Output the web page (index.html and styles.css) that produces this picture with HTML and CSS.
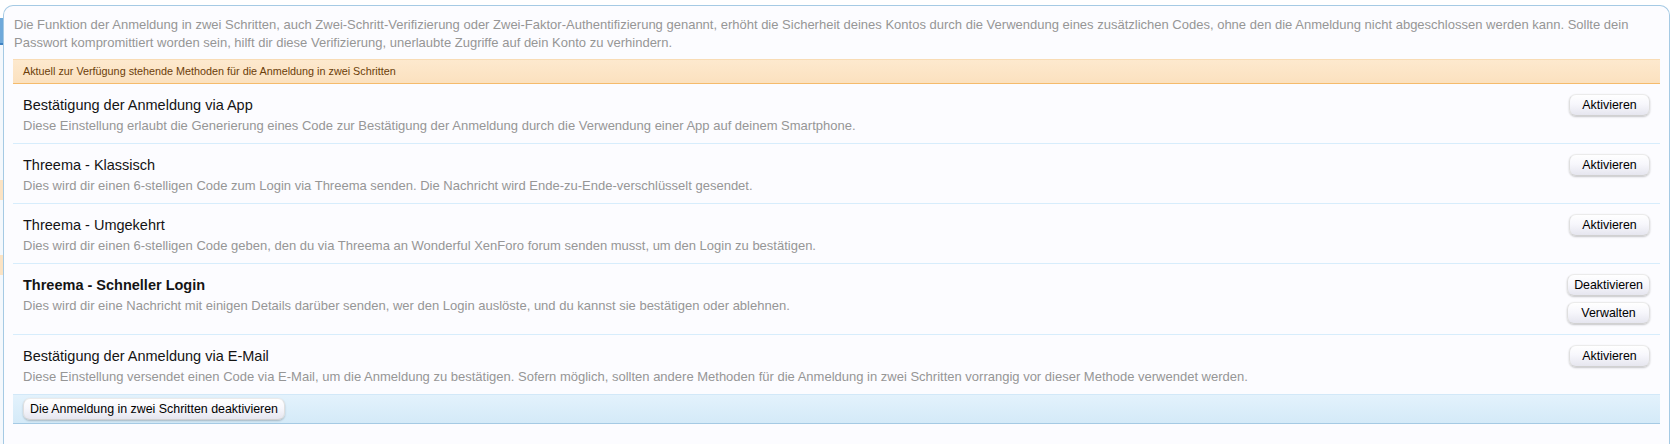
FILE: index.html
```html
<!DOCTYPE html>
<html lang="de">
<head>
<meta charset="utf-8">
<title>Zwei-Schritt-Verifizierung</title>
<link rel="stylesheet" href="styles.css">
</head>
<body>
<div class="page">
  <div class="edge"></div>
  <div class="overlay">
    <p class="intro">Die Funktion der Anmeldung in zwei Schritten, auch Zwei-Schritt-Verifizierung oder Zwei-Faktor-Authentifizierung genannt, erhöht die Sicherheit deines Kontos durch die Verwendung eines zusätzlichen Codes, ohne den die Anmeldung nicht abgeschlossen werden kann. Sollte dein Passwort kompromittiert worden sein, hilft dir diese Verifizierung, unerlaubte Zugriffe auf dein Konto zu verhindern.</p>
    <h3 class="subheading">Aktuell zur Verfügung stehende Methoden für die Anmeldung in zwei Schritten</h3>
    <ol class="methods">
      <li class="method">
        <div class="info">
          <h4 class="title">Bestätigung der Anmeldung via App</h4>
          <div class="explain">Diese Einstellung erlaubt die Generierung eines Code zur Bestätigung der Anmeldung durch die Verwendung einer App auf deinem Smartphone.</div>
        </div>
        <div class="controls"><button class="button">Aktivieren</button></div>
      </li>
      <li class="method">
        <div class="info">
          <h4 class="title">Threema - Klassisch</h4>
          <div class="explain">Dies wird dir einen 6-stelligen Code zum Login via Threema senden. Die Nachricht wird Ende-zu-Ende-verschlüsselt gesendet.</div>
        </div>
        <div class="controls"><button class="button">Aktivieren</button></div>
      </li>
      <li class="method">
        <div class="info">
          <h4 class="title">Threema - Umgekehrt</h4>
          <div class="explain">Dies wird dir einen 6-stelligen Code geben, den du via Threema an Wonderful XenForo forum senden musst, um den Login zu bestätigen.</div>
        </div>
        <div class="controls"><button class="button">Aktivieren</button></div>
      </li>
      <li class="method">
        <div class="info">
          <h4 class="title enabled">Threema - Schneller Login</h4>
          <div class="explain">Dies wird dir eine Nachricht mit einigen Details darüber senden, wer den Login auslöste, und du kannst sie bestätigen oder ablehnen.</div>
        </div>
        <div class="controls"><button class="button">Deaktivieren</button><button class="button">Verwalten</button></div>
      </li>
      <li class="method">
        <div class="info">
          <h4 class="title">Bestätigung der Anmeldung via E-Mail</h4>
          <div class="explain">Diese Einstellung versendet einen Code via E-Mail, um die Anmeldung zu bestätigen. Sofern möglich, sollten andere Methoden für die Anmeldung in zwei Schritten vorrangig vor dieser Methode verwendet werden.</div>
        </div>
        <div class="controls"><button class="button">Aktivieren</button></div>
      </li>
    </ol>
    <div class="footer"><button class="button">Die Anmeldung in zwei Schritten deaktivieren</button></div>
  </div>
</div>
</body>
</html>
```
FILE: styles.css
```css
html, body {
  margin: 0;
  padding: 0;
  background: #ffffff;
}

body {
  font-family: "Liberation Sans", Arial, sans-serif;
  color: #000;
  height: 444px;
  overflow: hidden;
}

.page {
  display: flex;
  align-items: flex-start;
  height: 444px;
}

.edge {
  width: 3px;
  flex: none;
  height: 444px;
  background: linear-gradient(to bottom,
    #ffffff 0, #ffffff 18px,
    #6fa9da 18px, #6fa9da 43px,
    #3f82c2 43px, #3f82c2 45px,
    #f4f8fc 45px, #f4f8fc 180px,
    #fbe3c4 180px, #fbe3c4 200px,
    #f4f8fc 200px, #f4f8fc 255px,
    #fbe3c4 255px, #fbe3c4 275px,
    #f4f8fc 275px);
}

.overlay {
  flex: none;
  width: 1667px;
  margin-top: 5px;
  min-height: 440px;
  box-sizing: border-box;
  background: #fcfcff;
  border: 1px solid #a5cae4;
  border-bottom: none;
  border-radius: 10px 10px 0 0;
  padding: 10px 9px 0 9px;
}

.intro {
  margin: 0 0 7px 0;
  padding: 0 1px;
  font-size: 13px;
  line-height: 18px;
  color: #969696;
}

.subheading {
  margin: 0;
  font-weight: normal;
  font-size: 10.8px;
  line-height: 13px;
  padding: 5px 10px;
  color: #6b3e0a;
  background: linear-gradient(to bottom, #fde9ce, #fbe1bf);
  border-top: 1px solid #f9dcb5;
  border-bottom: 1px solid #f5bb6c;
}

.methods {
  list-style: none;
  margin: 0;
  padding: 0;
}

.method {
  display: flex;
  justify-content: space-between;
  align-items: flex-start;
  padding: 10px;
  border-bottom: 1px solid #d7edfc;
}

.method:last-child {
  border-bottom: none;
}

.info {
  flex: 1;
  min-width: 0;
  padding-top: 2px;
  margin-bottom: -2px;
}

.title {
  margin: 0;
  font-weight: normal;
  font-size: 14.5px;
  line-height: 19px;
  color: #141414;
}

.title.enabled {
  font-weight: bold;
}

.explain {
  margin-top: 2px;
  font-size: 13px;
  line-height: 18px;
  color: #969696;
}

.controls {
  display: flex;
  flex-direction: column;
  align-items: stretch;
  gap: 6px;
  flex: none;
}

.button {
  font-family: "Liberation Sans", Arial, sans-serif;
  font-size: 12.4px;
  color: #000;
  height: 22px;
  line-height: 20px;
  padding: 0 6px;
  border: 1px solid;
  border-color: #ebebeb #dfdfdf #d1d1d1 #dfdfdf;
  border-radius: 7px;
  background: linear-gradient(to bottom, #ffffff 0%, #f7f7fc 45%, #e6e6ef 100%);
  box-shadow: 0 1px 2px rgba(0, 0, 0, 0.22);
  cursor: pointer;
}

.controls .button {
  min-width: 81px;
}

.footer {
  padding: 3px 10px;
  background: linear-gradient(to bottom, #e3f2fc, #d4eaf8);
  border-top: 1px solid #d2e8f8;
  border-bottom: 1px solid #a5cae4;
}
```
